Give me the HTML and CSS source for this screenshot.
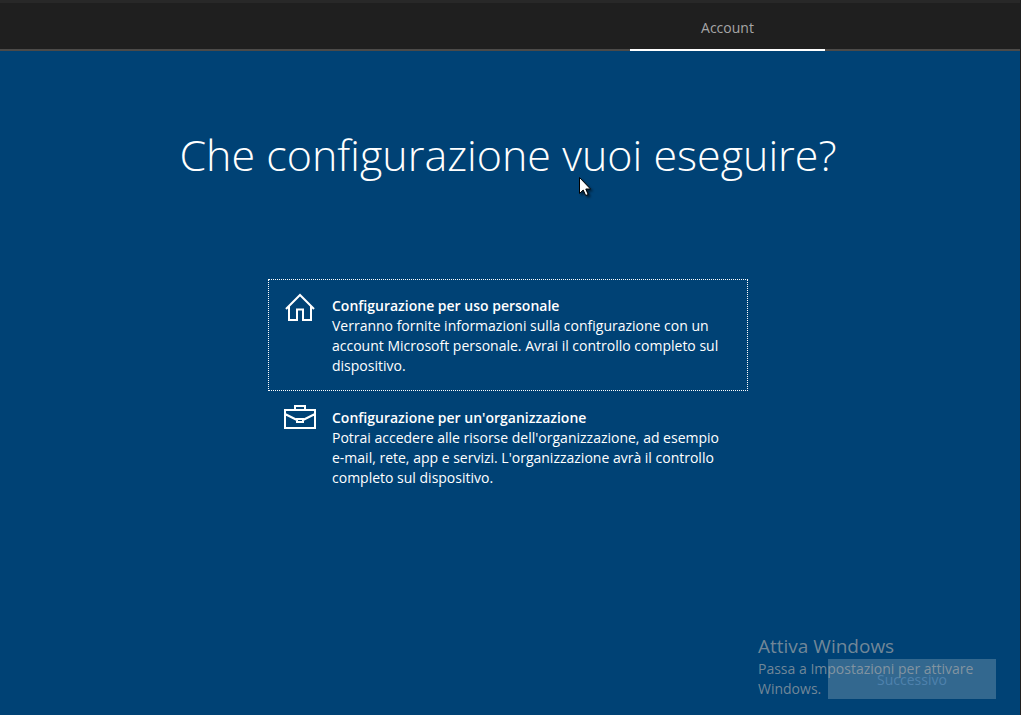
FILE: index.html
```html
<!DOCTYPE html>
<html lang="it">
<head>
<meta charset="utf-8">
<meta name="viewport" content="width=device-width, initial-scale=1">
<title>Che configurazione vuoi eseguire?</title>
<link rel="stylesheet" href="styles.css">
</head>
<body>
<header class="topbar">
  <nav class="steps">
    <a class="step" href="#account" aria-current="step">Account</a>
  </nav>
</header>
<main class="content" id="account">
  <h1 class="title">Che configurazione vuoi eseguire?</h1>
  <div class="options">
    <button class="option option-focused" type="button">
      <svg class="option-icon" viewBox="0 0 32 32" aria-hidden="true">
        <path d="M2 18 16 4 30 18M5 15.500V29H13V18.500H19V29H27V15.500"/>
      </svg>
      <span class="option-text">
        <strong class="option-name">Configurazione per uso personale</strong>
        <span>Verranno fornite informazioni sulla configurazione con un account Microsoft personale. Avrai il controllo completo sul dispositivo.</span>
      </span>
    </button>
    <button class="option" type="button">
      <svg class="option-icon" viewBox="0 0 32 32" aria-hidden="true">
        <path d="M1 7H31V25H1ZM11 7V3H21V7M1 11 13 17M31 11 19 17M13 16H19V19H13Z"/>
      </svg>
      <span class="option-text">
        <strong class="option-name">Configurazione per un'organizzazione</strong>
        <span>Potrai accedere alle risorse dell'organizzazione, ad esempio e-mail, rete, app e servizi. L'organizzazione avrà il controllo completo sul dispositivo.</span>
      </span>
    </button>
  </div>
</main>
<footer class="actions">
  <button class="next" type="button" disabled>Successivo</button>
</footer>
<aside class="watermark">
  <p class="watermark-title">Attiva Windows</p>
  <p class="watermark-text">Passa a Impostazioni per attivare Windows.</p>
</aside>
<svg class="pointer" viewBox="0 0 12 19" aria-hidden="true">
  <path d="M.5.500V16.500L4.200 13 6.700 18.500 9.200 17.500 6.800 12H11.500Z"/>
</svg>
</body>
</html>
```

FILE: styles.css
```css
* {
  box-sizing: border-box;
}

body {
  display: flex;
  flex-direction: column;
  min-height: 100vh;
  margin: 0;
  position: relative;
  border-right: 1px solid #1f1f1f;
  background: #004275;
  color: #fff;
  font: 14px/20px "Open Sans", "Noto Sans", sans-serif;
}

button {
  margin: 0;
  border: 0;
  color: inherit;
  font: inherit;
}

.topbar {
  height: 51px;
  border-top: 3px solid #282828;
  background: linear-gradient(#4c4a48, #4c4a48) bottom / 100% 2px no-repeat #1f1f1f;
}

.steps {
  display: flex;
  justify-content: flex-end;
  height: 100%;
  padding-right: 195px;
}

.step {
  display: flex;
  align-items: center;
  justify-content: center;
  width: 195px;
  padding-top: 4px;
  border-bottom: 2px solid #fff;
  color: #a6a6a6;
  text-decoration: none;
}

.content {
  display: flex;
  flex: 1;
  flex-direction: column;
  align-items: center;
  padding: 72px 4px 0 0;
}

.title {
  margin: 0 0 92px;
  font-size: 43px;
  font-weight: 300;
  line-height: 64px;
}

.options {
  width: 480px;
  max-width: 100%;
}

.option {
  display: flex;
  gap: 16px;
  width: 100%;
  padding: 16px 15px 14px;
  border: 1px solid transparent;
  background: none;
  text-align: left;
}

.option-focused {
  border: 1px dotted #fff;
}

.option-icon {
  flex: none;
  width: 32px;
  height: 32px;
  margin-top: -5px;
  fill: none;
  stroke: #fff;
  stroke-width: 2;
}

.option-text,
.option-name {
  display: block;
}

.option-name {
  font-weight: 600;
}

.actions {
  display: flex;
  justify-content: flex-end;
  padding: 0 24px 16px;
}

.next {
  width: 168px;
  height: 40px;
  padding: 2px 0 0;
  background: #33688f;
  color: #4f82ad;
}

.watermark {
  position: absolute;
  right: 22px;
  bottom: 16px;
  width: 240px;
  color: rgb(170 170 170 / 68%);
  pointer-events: none;
}

.watermark p {
  margin: 0;
}

.watermark-title {
  font-size: 19px;
  line-height: 26px;
}

.pointer {
  position: absolute;
  top: 177px;
  left: 579px;
  width: 12px;
  height: 19px;
  fill: #fff;
  stroke: #000;
  filter: drop-shadow(2px 2px 1px rgb(0 0 0 / 50%));
}
```
